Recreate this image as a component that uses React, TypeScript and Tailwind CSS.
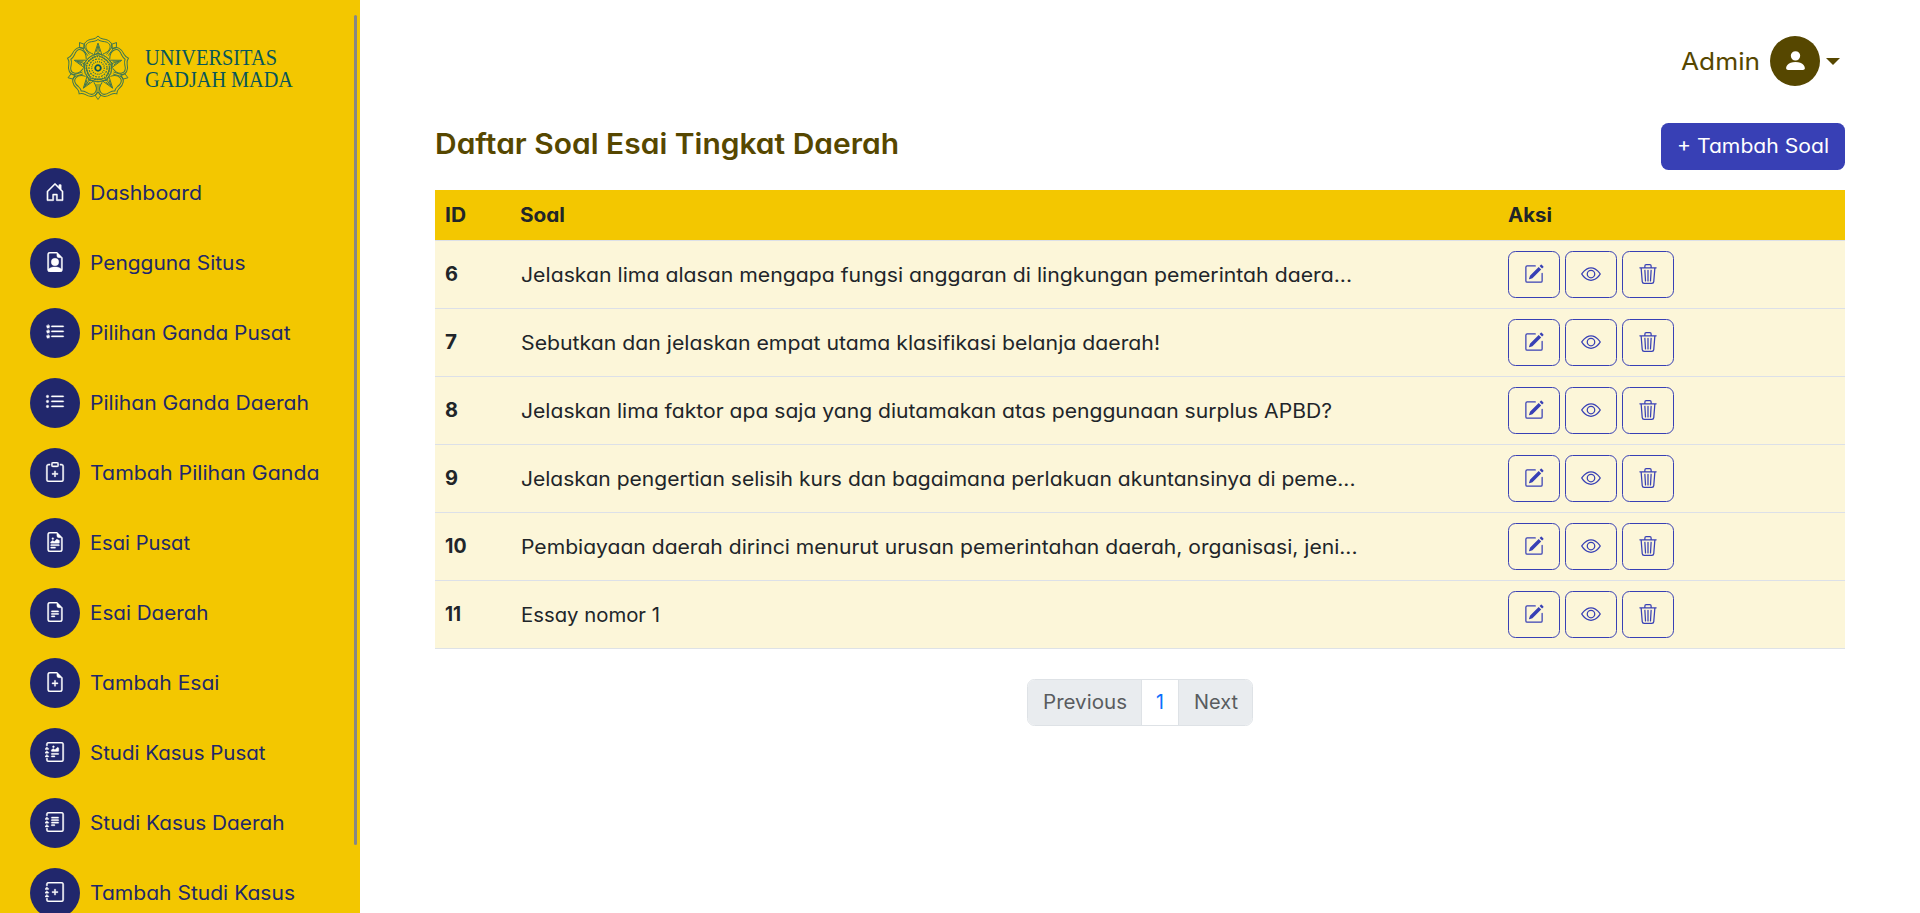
import { useLayoutEffect, useRef } from "react";
import type { ReactNode } from "react";
import type { IconType } from "react-icons";
import {
  BsClipboardPlus,
  BsEye,
  BsFileEarmarkPerson,
  BsFileEarmarkPlus,
  BsFileEarmarkRichtext,
  BsFileEarmarkText,
  BsHouseDoor,
  BsJournalPlus,
  BsJournalRichtext,
  BsJournalText,
  BsListStars,
  BsListUl,
  BsPencilSquare,
  BsPersonFill,
  BsTrash3,
} from "react-icons/bs";

/** One line of text, stretched horizontally to fill the given width. */
function Line({ width, children, className = "" }: { width: number; children: string; className?: string }) {
  const ref = useRef<HTMLSpanElement>(null);
  useLayoutEffect(() => {
    const el = ref.current;
    if (!el) return;
    el.style.transform = "none";
    const natural = el.getBoundingClientRect().width;
    el.style.transform = `scaleX(${width / natural})`;
  }, [width, children]);
  return (
    <span className={`block text-left whitespace-nowrap ${className}`} style={{ width }}>
      <span ref={ref} className="inline-block origin-left">
        {children}
      </span>
    </span>
  );
}

const menu: { label: string; width: number; icon: IconType }[] = [
  { label: "Dashboard", width: 112, icon: BsHouseDoor },
  { label: "Pengguna Situs", width: 155.5, icon: BsFileEarmarkPerson },
  { label: "Pilihan Ganda Pusat", width: 200.5, icon: BsListStars },
  { label: "Pilihan Ganda Daerah", width: 219, icon: BsListUl },
  { label: "Tambah Pilihan Ganda", width: 229.5, icon: BsClipboardPlus },
  { label: "Esai Pusat", width: 100, icon: BsFileEarmarkRichtext },
  { label: "Esai Daerah", width: 118.5, icon: BsFileEarmarkText },
  { label: "Tambah Esai", width: 129.5, icon: BsFileEarmarkPlus },
  { label: "Studi Kasus Pusat", width: 175.5, icon: BsJournalRichtext },
  { label: "Studi Kasus Daerah", width: 194.5, icon: BsJournalText },
  { label: "Tambah Studi Kasus", width: 205, icon: BsJournalPlus },
];

const rows = [
  { id: "6", idWidth: 13, text: "Jelaskan lima alasan mengapa fungsi anggaran di lingkungan pemerintah daera...", width: 831 },
  { id: "7", idWidth: 12, text: "Sebutkan dan jelaskan empat utama klasifikasi belanja daerah!", width: 639 },
  { id: "8", idWidth: 13, text: "Jelaskan lima faktor apa saja yang diutamakan atas penggunaan surplus APBD?", width: 811 },
  { id: "9", idWidth: 13, text: "Jelaskan pengertian selisih kurs dan bagaimana perlakuan akuntansinya di peme...", width: 834.5 },
  { id: "10", idWidth: 21.5, text: "Pembiayaan daerah dirinci menurut urusan pemerintahan daerah, organisasi, jeni...", width: 836.5 },
  { id: "11", idWidth: 16, text: "Essay nomor 1", width: 139 },
];

function Emblem() {
  const turns = [0, 72, 144, 216, 288];
  return (
    <svg viewBox="-33 -33 66 66" className="h-[66px] w-[66px] shrink-0" fill="none" stroke="#3f7650">
      {turns.map((a) => (
        <g key={a} transform={`rotate(${a})`}>
          <path strokeWidth="1" d="M-14 -20C-15 -25 -11 -28.500 -5 -29Q-2 -29.500 0 -32Q2 -29.500 5 -29C11 -28.500 15 -25 14 -20" />
          <path strokeWidth="1" d="M-5 -14C-14 -17 -15 -26 -5 -26.500Q-1.500 -27 0 -28.500Q1.500 -27 5 -26.500C15 -26 14 -17 5 -14" />
          <path strokeWidth=".9" d="M0 -25L-4 -13L0 -15L4 -13ZM0 -24V-14M-2 -16L0 -22L2 -16" />
          <path strokeWidth=".8" d="M-8 -11L0 -15L8 -11M-10 -7L0 -13L10 -7" />
          <path strokeWidth=".9" transform="rotate(36)" d="M-1 -16V-25M1 -16V-25M-3 -27L0 -31.500L3 -27L0 -24Z" />
        </g>
      ))}
      <circle r="14" strokeWidth=".8" />
      <circle r="11.500" strokeWidth="1.400" strokeDasharray="1.500 1" />
      <circle r="9" strokeWidth="1.200" strokeDasharray="2 1" />
      <circle r="6.300" strokeWidth="1.400" strokeDasharray="1 1" />
      <circle r="2.800" stroke="#07565b" strokeWidth="1.800" />
    </svg>
  );
}

function ActionButton({ children, label }: { children: ReactNode; label: string }) {
  return (
    <button
      aria-label={label}
      className="flex h-[47px] w-[52px] items-center justify-center rounded-[7.5px] border border-[#3840b5] pb-0.5 text-xl text-[#3840b5]"
    >
      {children}
    </button>
  );
}

export default function App() {
  return (
    <div className="flex h-[913px] w-full overflow-hidden bg-white font-['Inter',sans-serif] text-[19.5px] text-[#212529] [font-feature-settings:'cv11']">
      <aside className="flex h-full w-[360px] shrink-0 overflow-hidden bg-[#f3c700]">
        <div className="flex w-[353px] shrink-0 flex-col">
          <div className="flex h-[168px] shrink-0 items-start gap-[14px] pt-[35px] pl-[65px]">
            <Emblem />
            <div className="flex flex-col pt-[12px] font-['Liberation_Serif',serif] text-[23px] leading-[21.500px] text-[#07565b]">
              <Line width={132}>UNIVERSITAS</Line>
              <Line width={148}>GADJAH MADA</Line>
            </div>
          </div>
          <nav className="flex flex-col gap-5 pl-[30px]">
            {menu.map(({ label, width, icon: Icon }) => (
              <a key={label} className="flex h-[50px] shrink-0 items-center gap-[9.5px] text-[#21276c]">
                <span className="flex h-[50px] w-[50px] items-center justify-center rounded-full bg-[#21276c] pb-0.5 text-xl text-white">
                  <Icon stroke="currentColor" strokeWidth={0.3} />
                </span>
                <Line width={width} className="pt-0.5">{label}</Line>
              </a>
            ))}
          </nav>
        </div>
        <div className="mt-[15px] ml-[0.500px] h-[830px] w-[3px] rounded-full bg-[#878787]" />
      </aside>

      <main className="flex min-w-0 flex-1 flex-col pr-[75px] pl-[75px]">
        <header className="flex h-[86px] items-end justify-end pr-[5px]">
          <div className="flex h-[50px] items-center text-[#564700]">
            <Line width={79} className="pt-0.5 text-[24px]">Admin</Line>
            <span className="ml-[10px] flex h-[50px] w-[50px] items-center justify-center rounded-full bg-[#564700] pb-0.5 text-[25px] text-white">
              <BsPersonFill />
            </span>
            <span className="ml-[6px] h-0 w-0 border-x-[7px] border-t-[7px] border-x-transparent border-t-[#564700]" />
          </div>
        </header>

        <div className="mt-[37px] flex h-[47px] items-center justify-between">
          <h1 className="pb-[5px] text-[28.5px] font-semibold text-[#564700]">
            <Line width={464}>Daftar Soal Esai Tingkat Daerah</Line>
          </h1>
          <button className="flex h-[47px] w-[184px] items-center justify-center rounded-[7.5px] bg-[#3840b5] text-white">
            <Line width={152}>+ Tambah Soal</Line>
          </button>
        </div>

        <section className="mt-5 flex flex-col">
          <div className="flex h-[50px] items-center bg-[#f3c700] pt-0.5 pl-[10px] font-bold">
            <div className="w-[75px]"><Line width={21}>ID</Line></div>
            <div className="w-[988px]"><Line width={45}>Soal</Line></div>
            <div><Line width={44}>Aksi</Line></div>
          </div>
          {rows.map((row) => (
            <div key={row.id} className="flex h-[68px] items-center border-t border-[#dce0e8] bg-[#fcf6d9] pl-[10px]">
              <div className="w-[75px] font-bold"><Line width={row.idWidth}>{row.id}</Line></div>
              <div className="w-[988px] pt-0.5 pl-[0.500px]"><Line width={row.width}>{row.text}</Line></div>
              <div className="flex gap-[5px]">
                <ActionButton label="Edit"><BsPencilSquare /></ActionButton>
                <ActionButton label="Lihat"><BsEye /></ActionButton>
                <ActionButton label="Hapus"><BsTrash3 /></ActionButton>
              </div>
            </div>
          ))}
          <div className="h-px bg-[#dee2e6]" />
        </section>

        <nav className="mt-[30px] flex h-[47px] w-[226px] self-center overflow-hidden rounded-[7.5px] border border-[#dee2e6] text-[#595c5f]">
          <span className="flex w-[114px] items-center justify-center border-r border-[#dee2e6] bg-[#e9ecef]">
            <Line width={84}>Previous</Line>
          </span>
          <span className="flex w-[37px] items-center justify-center border-r border-[#dee2e6] bg-white text-[#0d6efd]">1</span>
          <span className="flex flex-1 items-center justify-center bg-[#e9ecef]">
            <Line width={44}>Next</Line>
          </span>
        </nav>
      </main>
    </div>
  );
}
